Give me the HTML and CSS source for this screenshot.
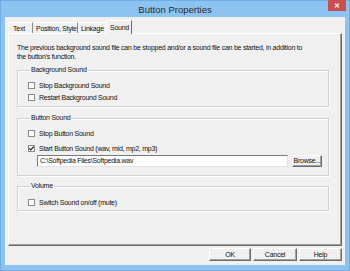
FILE: index.html
```html
<!DOCTYPE html>
<html lang="en">
<head>
  <meta charset="UTF-8" />
  <title>Button Properties</title>
  <link rel="stylesheet" href="styles.css">
</head>
<body>
  <div class="window">
    <div class="titlebar">
      <span class="title">Button Properties</span>
      <span class="close">&#x2715;</span>
    </div>
    <div class="client">
      <div class="tabs">
        <span class="tab">Text</span>
        <span class="tab">Position, Style</span>
        <span class="tab">Linkage</span>
        <span class="tab active">Sound</span>
      </div>
      <div class="panel">
        <p class="intro">The previous background sound file can be stopped and/or a sound file can be started, in addition to the button's function.</p>

        <!-- Background sound -->
        <fieldset class="group g1">
          <legend>Background Sound</legend>
          <label class="check"><span class="box"></span>Stop Background Sound</label>
          <label class="check"><span class="box"></span>Restart Background Sound</label>
        </fieldset>

        <!-- Button sound -->
        <fieldset class="group g2">
          <legend>Button Sound</legend>
          <label class="check"><span class="box"></span>Stop Button Sound</label>
          <label class="check"><span class="box"><svg width="5" height="5" viewBox="0 0 5 5"><path d="M0.3 2.2 L1.8 3.8 L4.7 0.6" fill="none" stroke="#222" stroke-width="1.2"/></svg></span>Start Button Sound (wav, mid, mp2, mp3)</label>
          <div class="file-row">
            <span class="field">C:\Softpedia Files\Softpedia.wav</span>
            <span class="btn browse">Browse...</span>
          </div>
        </fieldset>

        <!-- Volume -->
        <fieldset class="group g3">
          <legend>Volume</legend>
          <label class="check"><span class="box"></span>Switch Sound on/off (mute)</label>
        </fieldset>
      </div>
      <div class="actions">
        <span class="btn ok">OK</span>
        <span class="btn cancel">Cancel</span>
        <span class="btn help">Help</span>
      </div>
    </div>
  </div>
</body>
</html>
```

FILE: styles.css
```css
body{margin:0;font-family:"Liberation Sans",Arial,sans-serif;font-size:7px;letter-spacing:-0.25px;color:#111}
.window{width:350px;height:271px;box-sizing:border-box;background:#8cc3f1;border:1px solid #6eaee6;display:flex;flex-direction:column}
.titlebar{height:16px;position:relative;display:flex;justify-content:center;align-items:center}
.title{font-size:9.5px;letter-spacing:0;color:#2b2b2b;margin-top:1px}
.close{position:absolute;right:3px;top:-1px;width:18px;height:11px;background:#c9504f;color:#fff;font-size:7px;font-weight:bold;letter-spacing:0;display:flex;align-items:center;justify-content:center}
.client{margin:0 4px 5px 4px;background:#f0f0f0;flex:1;display:flex;flex-direction:column}
.tabs{display:flex;align-items:flex-end;padding-left:3px;height:16px}
.tab{height:11px;line-height:11px;padding:0 4px;border-top:1px solid #fff;border-right:1px solid #8a8a8a;box-sizing:border-box;white-space:nowrap}
.tab:first-child{border-left:1px solid #fff;padding-left:4px;width:25px}
.tab:nth-child(2){width:45px;padding-left:3px}
.tab:nth-child(3){width:28px;border-right:0;padding-left:3px}
.tab.active{height:14px;line-height:13px;width:26px;border-left:1px solid #fff;border-right:1px solid #696969;background:#f0f0f0;margin-bottom:-1px;position:relative;padding-left:3px}
.panel{height:213px;box-sizing:border-box;margin:0 3px;border:1px solid;border-color:#fff #696969 #696969 #fff;box-shadow:inset -1px -1px 0 #a0a0a0;padding:10px 12px 0 8px}
.intro{margin:0;line-height:8.5px;width:290px}
.group{margin:5px 0 0 0;padding:0 0 3px 9px;border:1px solid #d0d0d0;box-shadow:1px 1px 0 #fff, inset 1px 1px 0 #fff;min-width:0}
.group legend{padding:0 1px;margin-left:3px;line-height:8px}
.g2{margin-top:7px;padding-bottom:8px}
.g3{margin-top:6px;padding-bottom:2px}
.check{display:flex;align-items:center;height:12px;margin-top:0}
.g1 .check:first-of-type{margin-top:5px}
.g2 .check:first-of-type{margin-top:5px}
.g2 .check+.check{margin-top:3px}
.g3 .check{margin-top:6px}
.box{width:5px;height:5px;border:1px solid #8a8a8a;background:#fff;margin:0 4px 0 1px;display:flex;align-items:center;justify-content:center}
.box svg{display:block}
.file-row{display:flex;gap:4px;margin-top:1px;padding-left:10px}
.field{width:251px;height:12px;box-sizing:border-box;background:#fff;border:1px solid;border-color:#7a7a7a #e3e3e3 #e3e3e3 #7a7a7a;line-height:10px;padding-left:2px}
.btn{box-sizing:border-box;height:13px;line-height:11px;text-align:center;background:#f0f0f0;border:1px solid;border-color:#fff #6d6d6d #6d6d6d #fff;box-shadow:inset -1px -1px 0 #a0a0a0}
.browse{width:30px;height:12px;line-height:10px}
.actions{display:flex;justify-content:flex-end;gap:2px;margin:2px 3px 0 0}
.ok{width:42px}
.cancel{width:44px}
.help{width:43px}
```
